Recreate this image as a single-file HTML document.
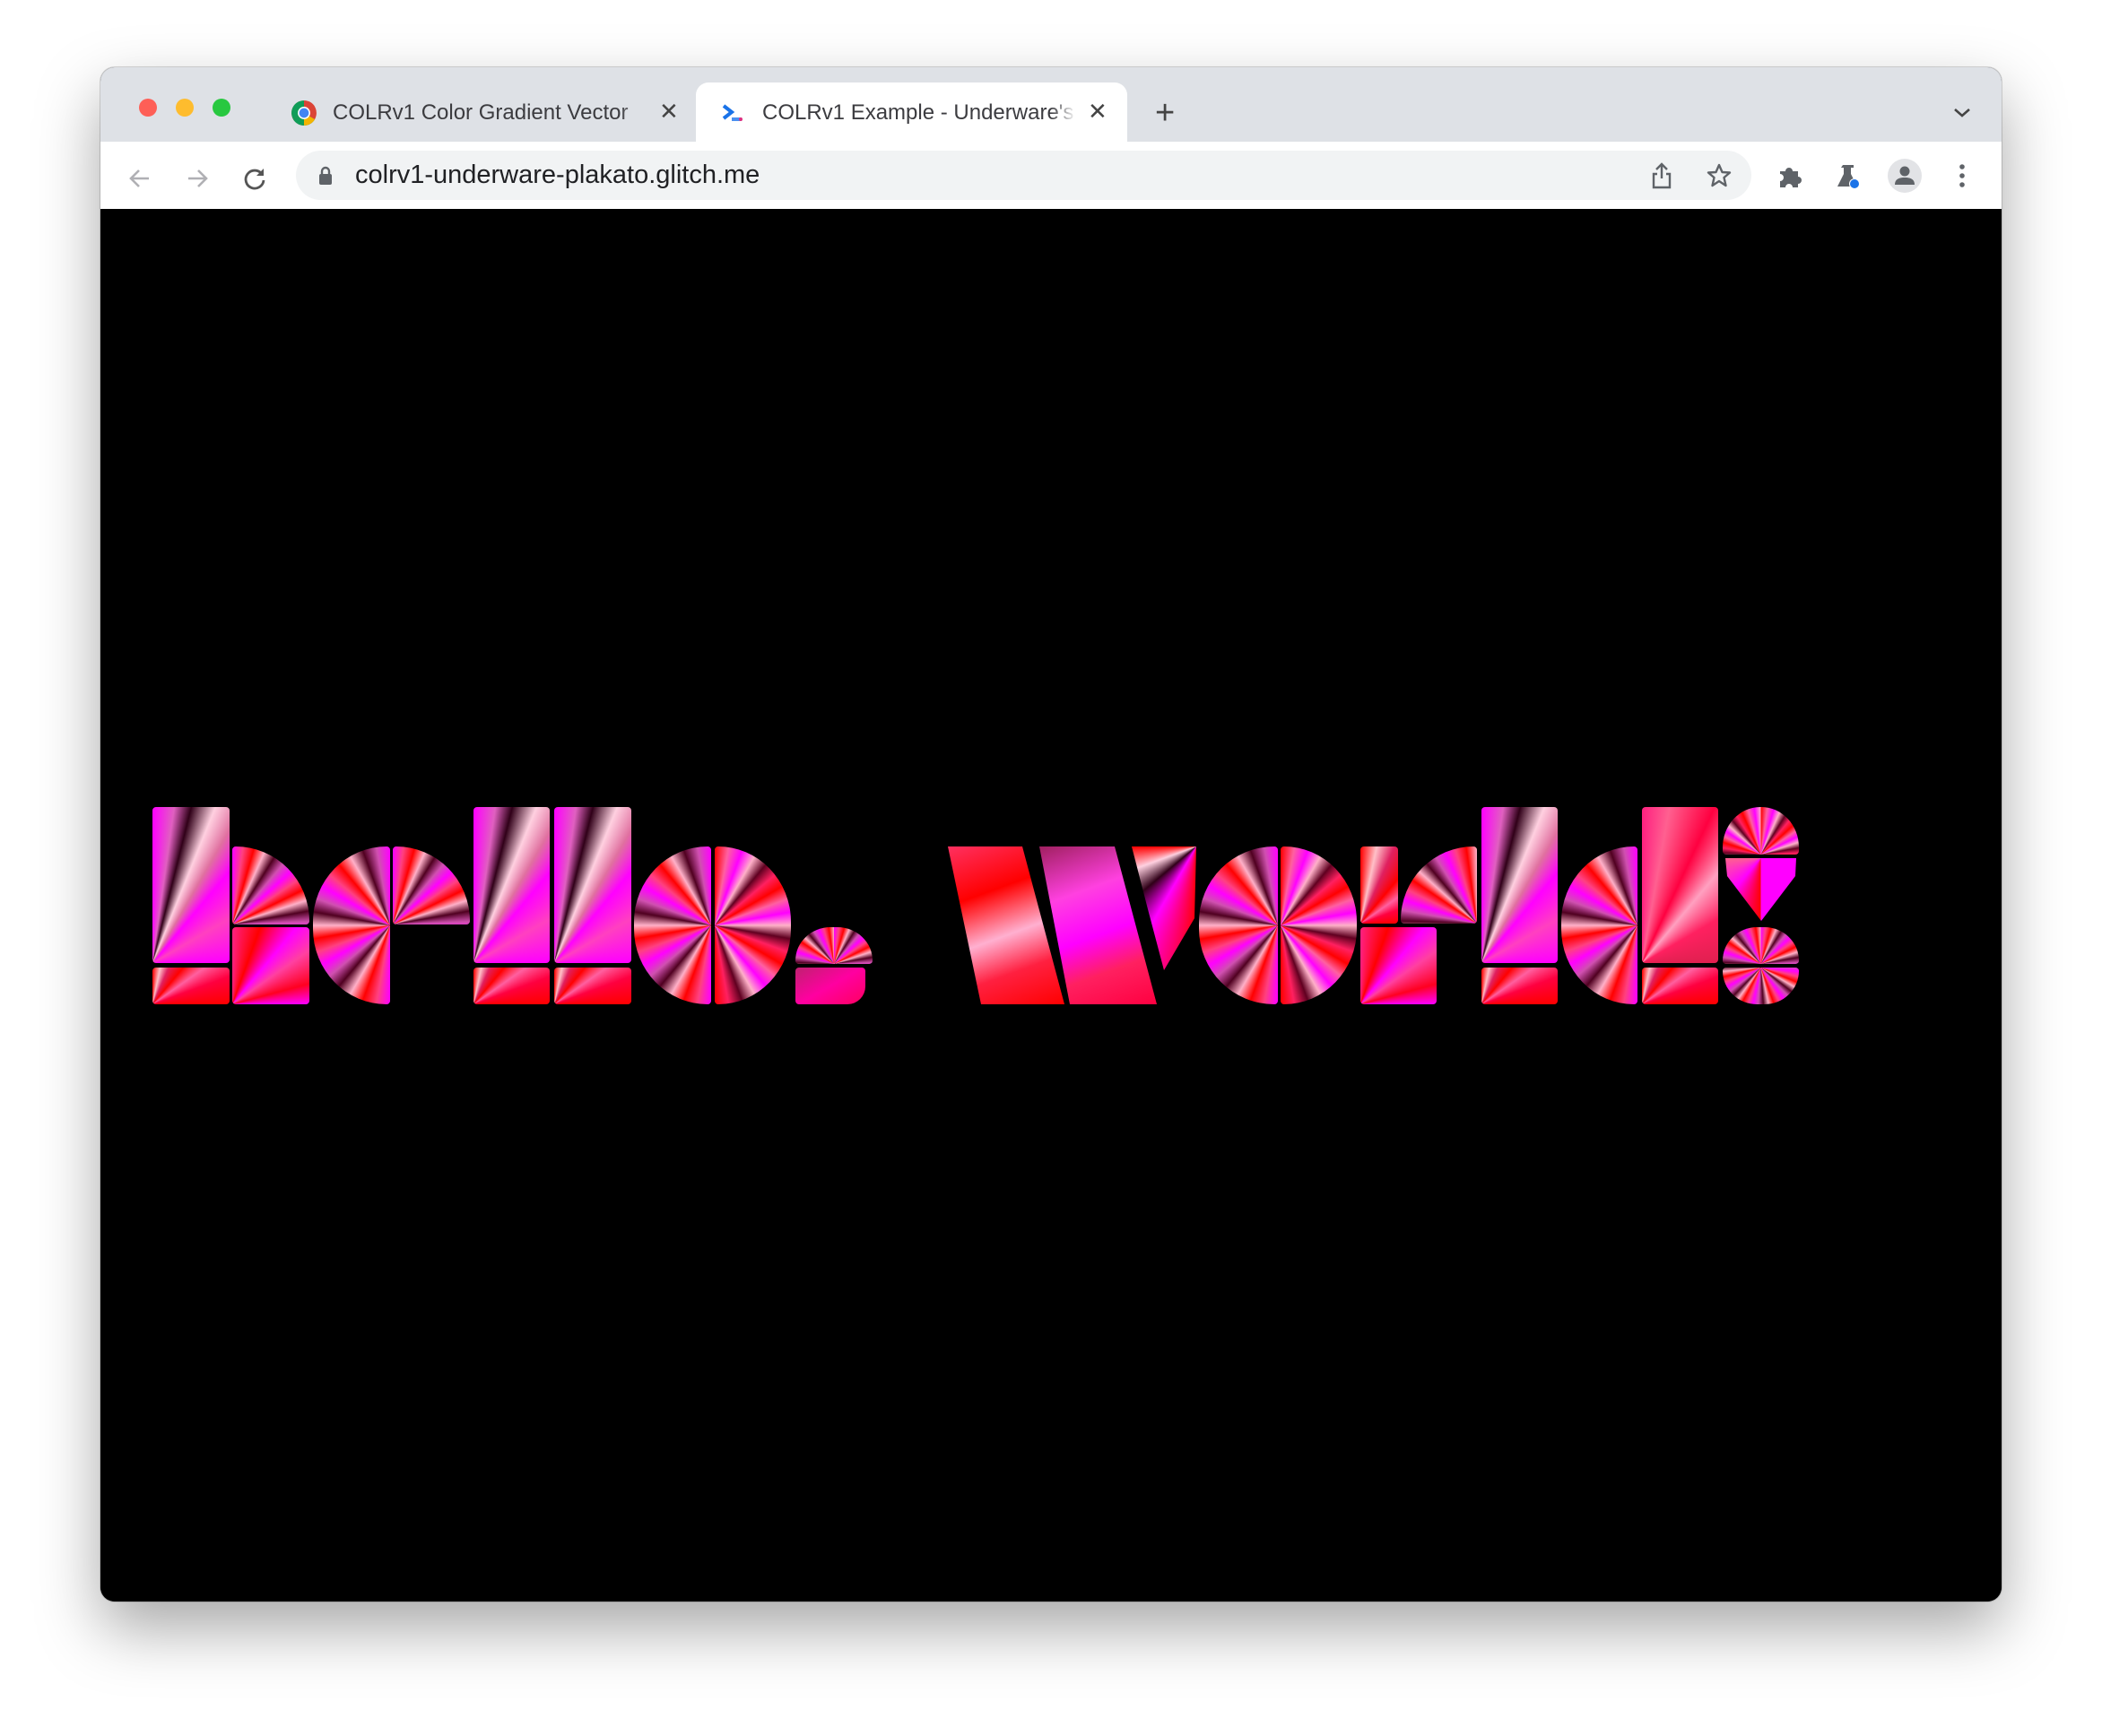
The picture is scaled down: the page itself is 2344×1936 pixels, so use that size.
<!DOCTYPE html>
<html><head><meta charset="utf-8"><style>
html,body{margin:0;padding:0;width:2344px;height:1936px;background:#fff;overflow:hidden;font-family:"Liberation Sans",sans-serif}
.win{position:absolute;left:112px;top:75px;width:2120px;height:1711px;border-radius:16px;overflow:hidden;box-shadow:0 30px 70px rgba(0,0,0,.35),0 0 0 1px rgba(0,0,0,.15);background:#000}
.tabbar{position:absolute;left:0;top:0;width:100%;height:83px;background:#dee1e6}
.tool{position:absolute;left:0;top:83px;width:100%;height:75px;background:#fff}
.a{position:absolute}
.dot{position:absolute;width:20px;height:20px;border-radius:50%;top:35px}
.t{position:absolute;font-size:24px;color:#3c3c40;white-space:nowrap;top:37px}
.p{position:absolute;border-radius:4px}
.s1{background:conic-gradient(from 0deg at 0% 100%,#ff00ff 0deg,#e060c0 8deg,#300018 14deg,#ffd0e0 22deg,#e070a0 30deg,#ff00ff 40deg,#ff40c0 60deg,#ff00ff 90deg)}
.s2{background:conic-gradient(from 0deg at 0% 100%,#ff0000 0deg,#ffc0c8 12deg,#e02060 24deg,#ff0000 40deg,#ff60a0 55deg,#ff0040 70deg,#ff0000 90deg)}
.s3{background:conic-gradient(from 0deg at 0% 100%,#ff2080,#ff0000 20deg,#ff00ff 40deg,#ff40a0 55deg,#ff0020 75deg,#ff00ff 90deg)}
.sunBR{background:repeating-conic-gradient(from 0deg at 100% 100%,#ff00ff 0deg,#ff4080 8deg,#ff0000 16deg,#ffb0c8 24deg,#500020 32deg,#d050b0 40deg,#ff00ff 48deg)}
.sunBL{background:repeating-conic-gradient(from 0deg at 0% 100%,#ff00ff 0deg,#ff4080 8deg,#ff0000 16deg,#ffb0c8 24deg,#500020 32deg,#d050b0 40deg,#ff00ff 48deg)}
.sunR{background:repeating-conic-gradient(from 0deg at 100% 50%,#ff00ff 0deg,#ff4080 10deg,#ff0000 20deg,#ffb0c8 30deg,#500020 40deg,#d050b0 50deg,#ff00ff 60deg)}
.sunL{background:repeating-conic-gradient(from 0deg at 0% 50%,#ff0000 0deg,#ff60a0 10deg,#ff00ff 20deg,#ffb0c8 30deg,#600020 40deg,#ff2060 50deg,#ff0000 60deg)}
.lin1{background:linear-gradient(160deg,#ff3060,#ff0000 30%,#ffb0d0 55%,#ff2040 75%,#ff0000)}
.lin2{background:linear-gradient(160deg,#a02060,#ff40e0 30%,#ff00ff 55%,#ff2060 75%,#ff0040)}
</style></head><body>
<div class="win">
 <div class="tabbar"></div>
 <div class="dot" style="left:43px;background:#fe5f57"></div>
 <div class="dot" style="left:84px;background:#febc2e"></div>
 <div class="dot" style="left:125px;background:#28c840"></div>
 <svg class="a" style="left:212px;top:36px" width="30" height="30" viewBox="0 0 28 28"><circle cx="14" cy="14" r="13" fill="#db4437"/><path d="M14 14 L25.3 20.5 A13 13 0 0 1 2.7 20.5 Z" fill="#0f9d58"/><path d="M14 14 L2.7 20.5 A13 13 0 0 1 14 1 Z" fill="#0f9d58"/><path d="M14 14 L25.3 20.5 A13 13 0 0 1 14 27 Z" fill="#f4b400"/><path d="M14 14 L14 1 A13 13 0 0 1 25.3 7.5 L25.3 20.5 Z" fill="#db4437"/><circle cx="14" cy="14" r="6.5" fill="#fff"/><circle cx="14" cy="14" r="5" fill="#4285f4"/></svg>
 <div class="t" style="left:259px">COLRv1 Color Gradient Vector</div>
 <div class="a" style="left:580px;top:30px;width:40px;height:50px;background:linear-gradient(90deg,rgba(222,225,230,0),#dee1e6 70%)"></div>
 <div class="t" style="left:623px;font-size:26px;top:34px;color:#444">✕</div>
 <div class="a" style="left:664px;top:17px;width:481px;height:70px;background:#fff;border-radius:14px 14px 0 0"></div>
 <svg class="a" style="left:692px;top:40px" width="26" height="22" viewBox="0 0 26 22"><path d="M3 3 L12 10 L3 17" fill="none" stroke="#1a73e8" stroke-width="4"/><rect x="12" y="16" width="11" height="4" fill="#4a90f0"/><circle cx="22" cy="18" r="2" fill="#e03080"/></svg>
 <div class="t" style="left:738px">COLRv1 Example - Underware's</div>
 <div class="a" style="left:1060px;top:25px;width:46px;height:50px;background:linear-gradient(90deg,rgba(255,255,255,0),#fff 60%)"></div>
 <div class="t" style="left:1101px;font-size:26px;top:34px;color:#444">✕</div>
 <div class="t" style="left:1176px;font-size:38px;top:30px;color:#444">+</div>
 <svg class="a" style="left:2064px;top:43px" width="24" height="16" viewBox="0 0 24 16"><path d="M4 4 L12 11 L20 4" fill="none" stroke="#444" stroke-width="2.6"/></svg>
 <div class="tool"></div>
 <svg class="a" style="left:30px;top:110px" width="28" height="28" viewBox="0 0 28 28"><path d="M24 14H5M13 5L4 14L13 23" fill="none" stroke="#b0b0b4" stroke-width="2.6"/></svg>
 <svg class="a" style="left:94px;top:110px" width="28" height="28" viewBox="0 0 28 28"><path d="M4 14H23M15 5L24 14L15 23" fill="none" stroke="#b0b0b4" stroke-width="2.6"/></svg>
 <svg class="a" style="left:158px;top:110px" width="28" height="28" viewBox="0 0 28 28"><path d="M22 9 A10 10 0 1 0 24 16" fill="none" stroke="#555" stroke-width="2.8"/><path d="M24 3 L24 11 L16 11 Z" fill="#555"/></svg>
 <div class="a" style="left:218px;top:93px;width:1623px;height:55px;background:#f1f3f4;border-radius:28px"></div>
 <svg class="a" style="left:243px;top:109px" width="16" height="24" viewBox="0 0 16 24"><path d="M4 10V7a4 4 0 0 1 8 0v3" fill="none" stroke="#5f6368" stroke-width="2.4"/><rect x="1" y="10" width="14" height="12" rx="2" fill="#5f6368"/></svg>
 <div class="a" style="left:284px;top:104px;font-size:29px;color:#202124">colrv1-underware-plakato.glitch.me</div>
 <svg class="a" style="left:1728px;top:105px" width="26" height="32" viewBox="0 0 26 32"><path d="M13 3V19M7 9L13 3L19 9M8 14H4V29H22V14H18" fill="none" stroke="#5f6368" stroke-width="2.4"/></svg>
 <svg class="a" style="left:1790px;top:106px" width="30" height="30" viewBox="0 0 30 30"><path d="M15 3 L18.5 11 L27 11.5 L20.5 17 L22.5 26 L15 21 L7.5 26 L9.5 17 L3 11.5 L11.5 11 Z" fill="none" stroke="#5f6368" stroke-width="2.4" stroke-linejoin="round"/></svg>
 <svg class="a" style="left:1869px;top:106px" width="30" height="30" viewBox="0 0 30 30"><path d="M4 10h6a4 4 0 0 1 8 0h6v6a4 4 0 0 1 0 8v4H18a4 4 0 0 0-8 0H4V21a4 4 0 0 0 0-8Z" fill="#5f6368"/></svg>
 <svg class="a" style="left:1933px;top:106px" width="32" height="32" viewBox="0 0 32 32"><path d="M10 3H22V6H19V13L26 27H4L11 13V6H8Z" fill="#5f6368"/><circle cx="23" cy="24" r="6" fill="#fff"/><circle cx="23" cy="24" r="5" fill="#1a73e8"/></svg>
 <div class="a" style="left:1993px;top:102px;width:38px;height:38px;border-radius:50%;background:#e2e3e6"></div>
 <svg class="a" style="left:1999px;top:108px" width="26" height="26" viewBox="0 0 26 26"><circle cx="13" cy="8" r="5.5" fill="#5f6368"/><path d="M2 23C2 16 8 15 13 15S24 16 24 23Z" fill="#5f6368"/></svg>
 <svg class="a" style="left:2068px;top:106px" width="16" height="30" viewBox="0 0 16 30"><circle cx="8" cy="5" r="2.8" fill="#5f6368"/><circle cx="8" cy="15" r="2.8" fill="#5f6368"/><circle cx="8" cy="25" r="2.8" fill="#5f6368"/></svg>
 <div class="a" style="left:0;top:158px;width:100%;height:1553px;background:#000"></div>
</div>
<div id="g">
 <div class="p s1" style="left:170px;top:900px;width:86px;height:174px"></div>
 <div class="p s2" style="left:170px;top:1079px;width:86px;height:41px"></div>
 <div class="p sunBL" style="left:259px;top:944px;width:86px;height:87px;border-radius:4px 86px 4px 4px/4px 87px 4px 4px"></div>
 <div class="p s3" style="left:259px;top:1034px;width:86px;height:86px"></div>
 <div class="p sunR" style="left:349px;top:944px;width:86px;height:176px;border-radius:86px 4px 4px 86px/88px 4px 4px 88px"></div>
 <div class="p sunBL" style="left:438px;top:944px;width:86px;height:87px;border-radius:4px 86px 4px 4px/4px 87px 4px 4px"></div>
 <div class="p s1" style="left:528px;top:900px;width:85px;height:174px"></div>
 <div class="p s2" style="left:528px;top:1079px;width:85px;height:41px"></div>
 <div class="p s1" style="left:618px;top:900px;width:86px;height:174px"></div>
 <div class="p s2" style="left:618px;top:1079px;width:86px;height:41px"></div>
 <div class="p sunR" style="left:707px;top:944px;width:86px;height:176px;border-radius:86px 4px 4px 86px/88px 4px 4px 88px"></div>
 <div class="p sunL" style="left:797px;top:944px;width:85px;height:176px;border-radius:4px 85px 85px 4px/4px 88px 88px 4px"></div>
 <div class="p" style="left:887px;top:1034px;width:86px;height:41px;border-radius:43px 43px 4px 4px/41px 41px 4px 4px;background:repeating-conic-gradient(from 0deg at 50% 100%,#ff00ff 0deg,#ff4080 8deg,#ff0000 16deg,#ffb0c8 24deg,#500020 32deg,#d050b0 40deg,#ff00ff 48deg)"></div>
 <div class="p" style="left:887px;top:1079px;width:78px;height:41px;border-radius:4px 4px 20px 4px;background:linear-gradient(150deg,#c02070,#ff00a0 50%,#ff0060)"></div>
 <div class="p lin1" style="left:1057px;top:944px;width:130px;height:176px;border-radius:0;clip-path:polygon(0 0,83px 0,130px 176px,37px 176px)"></div>
 <div class="p lin2" style="left:1159px;top:944px;width:131px;height:176px;border-radius:0;clip-path:polygon(0 0,84px 0,131px 176px,34px 176px)"></div>
 <div class="p" style="left:1262px;top:944px;width:72px;height:138px;border-radius:0;clip-path:polygon(0 0,72px 0,70px 80px,36px 138px,18px 70px);background:conic-gradient(from 180deg at 100% 0%,#ff0000,#ff00ff 30deg,#300018 50deg,#ffd0e0 70deg,#ff0000 90deg)"></div>
 <div class="p sunR" style="left:1337px;top:944px;width:88px;height:176px;border-radius:88px 4px 4px 88px/88px 4px 4px 88px"></div>
 <div class="p sunL" style="left:1428px;top:944px;width:85px;height:176px;border-radius:4px 85px 85px 4px/4px 88px 88px 4px"></div>
 <div class="p s2" style="left:1517px;top:944px;width:42px;height:86px"></div>
 <div class="p s3" style="left:1517px;top:1034px;width:85px;height:86px"></div>
 <div class="p sunBR" style="left:1562px;top:944px;width:85px;height:86px;border-radius:85px 4px 4px 4px/86px 4px 4px 4px"></div>
 <div class="p s1" style="left:1652px;top:900px;width:85px;height:174px"></div>
 <div class="p s2" style="left:1652px;top:1079px;width:85px;height:41px"></div>
 <div class="p sunR" style="left:1741px;top:944px;width:85px;height:176px;border-radius:85px 4px 4px 85px/88px 4px 4px 88px"></div>
 <div class="p" style="left:1831px;top:900px;width:85px;height:174px;background:conic-gradient(from 0deg at 0% 100%,#ff2080,#ff6090 10deg,#ff0040 25deg,#ffa0c0 40deg,#ff2060 60deg,#e02050 90deg)"></div>
 <div class="p s2" style="left:1831px;top:1079px;width:85px;height:41px"></div>
 <div class="p" style="left:1921px;top:900px;width:85px;height:53px;border-radius:42px 42px 4px 4px/45px 45px 4px 4px;background:repeating-conic-gradient(from 0deg at 50% 100%,#ff0000 0deg,#ff60a0 8deg,#ff00ff 16deg,#ffb0c8 24deg,#600020 32deg,#ff2060 40deg,#ff0000 48deg)"></div>
 <div class="p" style="left:1924px;top:957px;width:79px;height:70px;border-radius:0;clip-path:polygon(0 0,79px 0,78px 20px,40px 70px,2px 20px);background:conic-gradient(from 180deg at 50% 0%,#ff0000,#ff00ff 40deg,#ff6090 90deg,#ff0060 140deg,#ff00ff 180deg)"></div>
 <div class="p" style="left:1921px;top:1034px;width:85px;height:41px;border-radius:42px 42px 4px 4px/41px 41px 4px 4px;background:repeating-conic-gradient(from 0deg at 50% 100%,#ff00ff 0deg,#ff4080 8deg,#ff0000 16deg,#ffb0c8 24deg,#500020 32deg,#d050b0 40deg,#ff00ff 48deg)"></div>
 <div class="p" style="left:1921px;top:1079px;width:85px;height:41px;border-radius:4px 4px 42px 42px/4px 4px 41px 41px;background:repeating-conic-gradient(from 0deg at 50% 0%,#ff00ff 0deg,#ff4080 8deg,#ff0000 16deg,#ffb0c8 24deg,#500020 32deg,#d050b0 40deg,#ff00ff 48deg)"></div>
</div>
</body></html>
